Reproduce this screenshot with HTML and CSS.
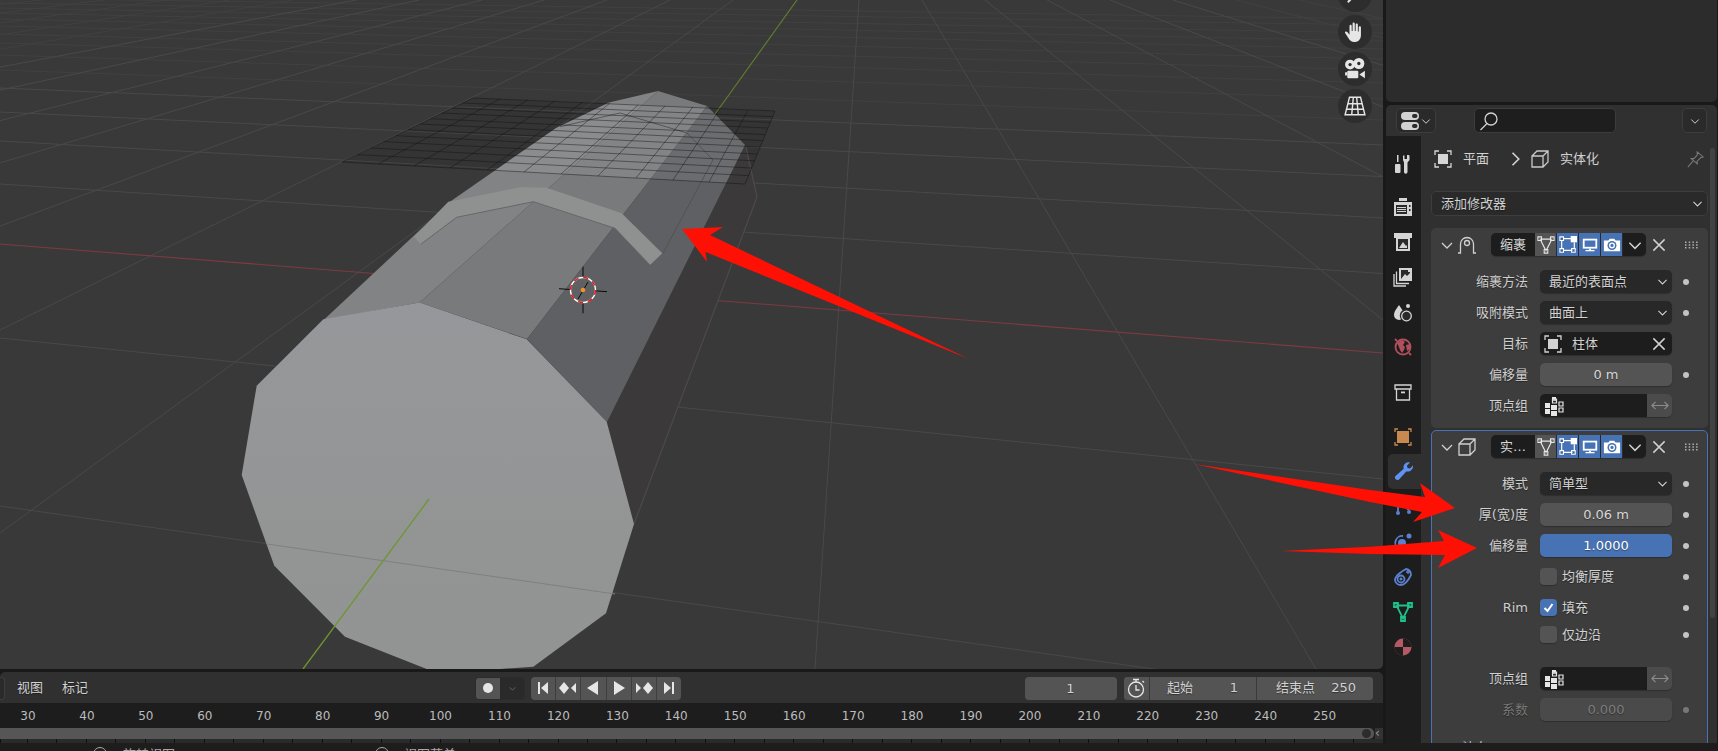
FILE: index.html
```html
<!DOCTYPE html>
<html lang="zh">
<head>
<meta charset="utf-8">
<title>Blender</title>
<link rel="stylesheet" href="styles.css">
</head>
<body>
<svg class="defs" width="0" height="0">
  <symbol id="i-chev" viewBox="0 0 16 16"><polyline class="s" points="3,6 8,11 13,6"/></symbol>
  <symbol id="i-close" viewBox="0 0 16 16"><path class="s" d="M3 3l10 10M13 3L3 13"/></symbol>
  <symbol id="i-grip" viewBox="0 0 15 8"><path class="dash" d="M1 1.200h14M1 4h14M1 6.800h14"/></symbol>
  <symbol id="i-obj" viewBox="0 0 20 20"><path class="s" d="M2 6V2h4M14 2h4v4M18 14v4h-4M6 18H2v-4"/><rect class="f" x="5" y="5" width="10" height="10"/></symbol>
  <symbol id="i-cube" viewBox="0 0 20 20"><path class="s" d="M2 7h11v11H2zM2 7l5-5h11v11l-5 5M13 7l5-5"/></symbol>
  <symbol id="i-shrink" viewBox="0 0 20 20"><path class="s" d="M1 18h2.500V9a6.500 6.500 0 0 1 13 0v9H19"/><circle class="s" cx="10" cy="8" r="2.500"/></symbol>
  <symbol id="i-vert" viewBox="0 0 20 20"><path class="s" d="M3.500 3.500h13l-6.500 13z"/><path class="sq" d="M1 1h4v4H1zM15 1h4v4h-4zM8 15h4v4H8z"/></symbol>
  <symbol id="i-edit" viewBox="0 0 20 20"><path class="s" d="M5 3h9M3 5v9M5 16h10M17 7v7"/><path class="sq" d="M1 1h4v4H1zM1 14h4v4H1zM14 14h4v4h-4z"/><rect class="f" x="13" y="0" width="7" height="7"/></symbol>
  <symbol id="i-mon" viewBox="0 0 20 20"><rect class="f" x="2" y="3" width="16" height="11"/><rect class="hole" x="4" y="5" width="12" height="7"/><rect class="f" x="5" y="15.500" width="10" height="1.500"/><rect class="f" x="9" y="14" width="2" height="2"/></symbol>
  <symbol id="i-cam" viewBox="0 0 20 20"><path class="f" d="M1 5h5l1.500-2h5L14 5h5v12H1z"/><circle class="holec" cx="10" cy="10.500" r="5"/><circle class="f" cx="10" cy="10.500" r="3.300"/><circle class="holec" cx="10" cy="10.500" r="1.800"/></symbol>
  <symbol id="i-vg" viewBox="0 0 20 20"><path class="f" d="M1 7h5v5H1zM1 13h5v5H1zM7 9h6v5H7zM7 15h6v5H7zM8 1h4v4H8z"/><path class="sq" d="M8.500 3h4v4h-4zM15 6h4v4h-4zM15 12h4v4h-4z"/></symbol>
  <symbol id="i-lr" viewBox="0 0 20 12"><path class="s" d="M1 6h18M5 2L1 6l4 4M15 2l4 4-4 4"/></symbol>
  <symbol id="i-pin" viewBox="0 0 20 20"><path class="s" d="M12 1l7 6-3 1-4 4 0 3-7-6 3 0 4-4zM7 12l-6 7"/></symbol>
  <symbol id="i-toggle" viewBox="0 0 20 20"><rect class="f" x="1" y="1" width="18" height="8" rx="4"/><rect class="f" x="1" y="11" width="18" height="8" rx="4"/><rect class="holed" x="12" y="3" width="5.500" height="4" rx="2"/><rect class="holed" x="12" y="13" width="5.500" height="4" rx="2"/></symbol>
  <symbol id="i-search" viewBox="0 0 20 20"><circle class="s" cx="12" cy="8" r="6"/><path class="s" d="M8 12.500L1.500 19"/></symbol>
  <symbol id="t-tool" viewBox="0 0 20 20"><path class="f" d="M4 1h1.500v7H4zM2 11a1 1 0 0 1 1-1h3.500a1 1 0 0 1 1 1v7a1 1 0 0 1-1 1H3a1 1 0 0 1-1-1z"/><path class="f" d="M10 1.500l1.500 0V5h2.500V1l0.500 0h1l1 .5V6l-2 2.500V18a1.500 1.500 0 0 1-3.500 0V8.500L10 6z"/></symbol>
  <symbol id="t-render" viewBox="0 0 20 20"><path class="f" d="M1 5h18v14H1zM6 1h8v3H6z"/><path class="holed" d="M3 8h11v9H3zM16 8h1.500v2H16zM16 12h1.500v2H16z"/><path class="f" d="M4 10h9v1H4zM4 12h9v1H4zM4 14h9v1H4z"/></symbol>
  <symbol id="t-output" viewBox="0 0 20 20"><path class="f" d="M1 1h18v5h-2v13H3V6H1z"/><path class="holed" d="M5 7h10v10H5z"/><path class="f" d="M6 16l4-6 3 4 1-1v3z"/></symbol>
  <symbol id="t-layer" viewBox="0 0 20 20"><path class="s" d="M1 7v12h12M3.500 4.500V16.500H16"/><path class="f" d="M6 1h13v13H6z"/><path class="holed" d="M8 3h9v9H8z"/><path class="f" d="M8 12l4-5 2 2 3-3v6zM15 3h2v2h-2z"/></symbol>
  <symbol id="t-scene" viewBox="0 0 20 20"><path class="f" d="M6 3c1 2 5 6 5 10a5 5 0 0 1-10 0c0-4 4-8 5-10z"/><circle class="holed" cx="13" cy="13.500" r="6.200"/><circle class="s" cx="13.500" cy="14" r="4.800"/><circle class="f" cx="15" cy="4" r="2"/></symbol>
  <symbol id="t-world" viewBox="0 0 20 20"><circle class="s2" cx="10" cy="10" r="7.500"/><path class="f" d="M4 6l5-3 3 2-2 3 2 2-1 3-2 3-2-3-1-3zM13 8l4-1 0 5-3 2z"/><path class="s2" d="M2 2l2 2M18 18l-2-2"/></symbol>
  <symbol id="t-coll" viewBox="0 0 20 20"><path class="s" d="M2 3h16v4H2zM3.500 7v11h13V7"/><rect class="f" x="8" y="9.500" width="4" height="1.800"/></symbol>
  <symbol id="t-objc" viewBox="0 0 20 20"><path class="s" d="M2 5V2h3M15 2h3v3M18 15v3h-3M5 18H2v-3"/><rect class="f" x="4" y="4" width="12" height="12"/></symbol>
  <symbol id="t-wrench" viewBox="0 0 20 20"><path class="f" d="M19 3.500l-3 3-2.500-.5-.5-2.500 3-3c-3-.8-6 1-6.500 4-.1.800 0 1.500.2 2.200L1.500 14a2.500 2.500 0 0 0 3.500 3.500l7.300-8.100c3.500 1 7.300-2 6.700-5.900z"/></symbol>
  <symbol id="t-part" viewBox="0 0 20 20"><path class="s2" d="M5 2v13M11 2c0 6 2 9 5 11"/><circle class="f" cx="5" cy="16" r="2"/><circle class="f" cx="16" cy="15" r="2"/></symbol>
  <symbol id="t-phys" viewBox="0 0 20 20"><circle class="f" cx="9" cy="11" r="4"/><path class="s2" d="M15 15a7 7 0 1 1-5-11"/><circle class="f" cx="16" cy="4" r="2.500"/></symbol>
  <symbol id="t-cons" viewBox="0 0 20 20"><path class="s2" d="M2 13c0-4 7-9 11-11 3 .5 5 3 5 6 -2 4-6 10-10 10-3 0-6-2-6-5z"/><circle class="s2" cx="8" cy="12" r="3.500"/><circle class="f" cx="8" cy="12" r="1.500"/><path class="s" d="M15 3v4M13 5h4"/></symbol>
  <symbol id="t-data" viewBox="0 0 20 20"><path class="s2" d="M3.500 3.500h13l-6.500 13z"/><path class="sq2" d="M1 1h4v4H1zM15 1h4v4h-4zM8 15h4v4H8z"/></symbol>
  <symbol id="t-mat" viewBox="0 0 20 20"><circle class="f" cx="10" cy="10" r="8.500"/><path class="blk" d="M10 1.500V10H18.500A8.500 8.500 0 0 0 10 1.500zM10 10H1.500A8.500 8.500 0 0 0 10 18.500z"/></symbol>
  <symbol id="g-hand" viewBox="0 0 20 20"><path class="f" d="M5 17l-4-6c-.6-1.400 1-2 2-1l2 2.500V4.500c0-1.500 2-1.500 2 0V9h.8V2.500c0-1.500 2-1.500 2 0V9h.8V3.500c0-1.500 2-1.500 2 0V9.500h.8V6c0-1.500 2-1.500 2 0v7c0 3-2 6-5 6H9c-2 0-3-1-4-2z"/></symbol>
  <symbol id="g-camera" viewBox="0 0 20 20"><circle class="f" cx="5.500" cy="6" r="4.500"/><circle class="f" cx="13.500" cy="5" r="5"/><rect class="f" x="3" y="11.500" width="10" height="7" rx="1"/><path class="f" d="M14 15l5-3.500v7zM1 13h2v3H1z"/><circle class="holed" cx="5.500" cy="6" r="1.500"/><circle class="holed" cx="13.500" cy="5" r="1.500"/></symbol>
  <symbol id="g-grid" viewBox="0 0 20 20"><path class="s" d="M5 2h10l4 16H1zM3.500 8h13M2.300 13h15.400M8.500 2L7 18M11.500 2L13 18"/></symbol>
  <symbol id="g-search" viewBox="0 0 20 20"><circle class="s3" cx="12" cy="8" r="6"/><path class="s3" d="M7 13L2 18"/></symbol>
  <symbol id="p-first" viewBox="0 0 14 14"><rect class="f" x="2" y="1" width="2" height="12"/><polygon class="f" points="12,1 12,13 5,7"/></symbol>
  <symbol id="p-kprev" viewBox="0 0 18 14"><polygon class="f" points="5,1 10,7 5,13 0,7"/><polygon class="f" points="17,2 17,12 12,7"/></symbol>
  <symbol id="p-rev" viewBox="0 0 14 14"><polygon class="f" points="12,0 12,14 1,7"/></symbol>
  <symbol id="p-play" viewBox="0 0 14 14"><polygon class="f" points="2,0 2,14 13,7"/></symbol>
  <symbol id="p-knext" viewBox="0 0 18 14"><polygon class="f" points="1,2 1,12 6,7"/><polygon class="f" points="13,1 18,7 13,13 8,7"/></symbol>
  <symbol id="p-last" viewBox="0 0 14 14"><polygon class="f" points="2,1 2,13 9,7"/><rect class="f" x="10" y="1" width="2" height="12"/></symbol>
  <symbol id="p-timer" viewBox="0 0 20 20"><circle class="s" cx="10" cy="11.500" r="7.500"/><path class="s" d="M7 1.500h6M10 1.500V4M10 7v5h3.500M16.500 3l1.500 1.500"/></symbol>
</svg>

<div class="app">
  <div class="work">
    <div class="left">
      <main class="viewport">
        <svg class="scene" viewBox="0 0 1383 669" preserveAspectRatio="none">
          <defs>
            <linearGradient id="capfill" x1="0" y1="0" x2="0" y2="1">
              <stop offset="0" stop-color="#96979a"/>
              <stop offset="1" stop-color="#919492"/>
            </linearGradient>
            <clipPath id="planeclip"><polygon points="342,162 473,98 775,111 745,184"/></clipPath>
          </defs>
          <g class="gridfar">
            <path d="M0 70L1383 120M0 55L1383 99M0 43L1383 83M0 34L1383 70M0 26L1383 59M0 19L1383 49M0 13L1383 41M0 8L1383 33M0 3L1383 25M0 -2L1383 19"/>
            <path d="M41 0L-5699 669M104 0L-5198 669M167 0L-4697 669M230 0L-4195 669M293 0L-3694 669M1236 0L3822 669M1299 0L4323 669"/>
          </g>
          <g class="grid">
            <path d="M0 506L1161 670M0 338L1383 479M0 184L1383 273.500M0 141L1383 218M0 112L1383 176.600M0 88L1383 145"/>
            <path d="M356 0L-3193 669M419 0L-2692 669M482 0L-2191 669M544 0L-1690 669M607 0L-1189 669M670 0L-688 669M733 0L-187 669M859 0L815 669M922 0L1316 669M985 0L1817 669M1047 0L2318 669M1110 0L2820 669M1173 0L3321 669"/>
          </g>
          <path class="axis-x" d="M0 244L1383 353"/>
          <path class="axis-y" d="M797 0L713 117"/>

          <g class="plane">
            <polygon class="plane-fill" points="342,162 473,98 775,111 745,184"/>
          </g>

          <polygon class="face-d" points="607,422 634,524 757,197 745,145"/>
          <path class="face-d-edge" d="M634 524L757 197L746 147"/>
          <polygon class="face-a" points="323.600,320 419.600,302.600 658,91 609,102.600 556,128 451,201"/>
          <polygon class="face-b" points="419.600,302.600 527,339 707,106 658,91"/>
          <polygon class="face-c" points="527,339 607,422 745,145 707,106"/>
          <g clip-path="url(#planeclip)">
            <polygon class="plane-lit" points="323.600,320 527,339 607,422 745,145 707,106 658,91 609,102.600 556,128 451,201"/>
          </g>
          <path class="ring" d="M560 126.700L620 113L687 133L713 160L663 253"/>
          <path class="plane-lines" d="M342 162L473 98M378 164L500 99M414 166L528 100M450 168L555 101M487 170L583 102M524 172L610 103M561 174L638 105M598 176L665 106M636 178L693 107M673 180L720 109M709 182L748 110M745 184L775 111M473 98L775 111M463 103L772.700 116.700M452.600 108L770.300 122.400M442.300 113L768 128M430.700 118.700L765.300 134.600M420 124L762.800 140.600M408 129.700L760 147M395.800 135.700L757.300 154M383.700 141.600L754.500 160.800M370.700 148L751.600 168M357 154.600L748.500 175.600M342 162L745 184"/>
          <polygon class="band" points="414,236.700 448.300,201.700 520,187.300 546.700,187.700 621.700,213.300 662.300,253.300 650,265 615,228.300 533.300,201.700 456.700,217.300 420.700,244.300"/>
          <path class="band-edge" d="M420.700 244.300L456.700 217.300L533.300 201.700L615 228.300L650 265"/>

          <polygon class="cap" points="419.600,302.600 526.700,339.300 606.700,421.700 634,524 606,613.300 533.300,666.700 500,669 426.700,669 345,636.700 274.300,565.700 241.700,475 256.700,385.700 323.300,319.300"/>
          <path class="cap-line" d="M267 544L615 594"/>
          <path class="axis-y-front" d="M429 499L303 669"/>

          <g class="cursor">
            <path class="cur-cross" d="M583 266.700V278M583 303V313.300M559 288.700L571 289.600M595 290.800L607 291.700M578 299L588 282"/>
            <circle class="cur-ring-w" cx="583" cy="290" r="12.500"/>
            <circle class="cur-ring-r" cx="583" cy="290" r="12.500"/>
            <circle class="cur-dot" cx="583" cy="290" r="2.300"/>
          </g>
        </svg>
        <div class="gizmos">
          <span class="gizmo"><svg class="ic18"><use href="#g-search"/></svg></span>
          <span class="gizmo"><svg class="ic22"><use href="#g-hand"/></svg></span>
          <span class="gizmo"><svg class="ic22"><use href="#g-camera"/></svg></span>
          <span class="gizmo"><svg class="ic22"><use href="#g-grid"/></svg></span>
        </div>
      </main>

      <section class="timeline">
        <div class="tl-head">
          <span class="tl-type"></span>
          <span class="tl-menu">视图</span>
          <span class="tl-menu">标记</span>
          <div class="rec">
            <span class="rec-dot"><i></i></span>
            <span class="rec-more"><svg class="ic9"><use href="#i-chev"/></svg></span>
          </div>
          <div class="transport">
            <span class="tbtn"><svg class="ic14"><use href="#p-first"/></svg></span>
            <span class="tbtn"><svg class="ic18w"><use href="#p-kprev"/></svg></span>
            <span class="tbtn"><svg class="ic14"><use href="#p-rev"/></svg></span>
            <span class="tbtn"><svg class="ic14"><use href="#p-play"/></svg></span>
            <span class="tbtn"><svg class="ic18w"><use href="#p-knext"/></svg></span>
            <span class="tbtn"><svg class="ic14"><use href="#p-last"/></svg></span>
          </div>
          <span class="frame">1</span>
          <div class="range">
            <span class="range-timer"><svg class="ic20"><use href="#p-timer"/></svg></span>
            <span class="range-seg range-start"><b>起始</b><b>1</b></span>
            <span class="range-seg range-end"><b>结束点</b><b>250</b></span>
          </div>
        </div>
        <div class="ruler">
          <span>30</span><span>40</span><span>50</span><span>60</span><span>70</span><span>80</span><span>90</span><span>100</span><span>110</span><span>120</span><span>130</span><span>140</span><span>150</span><span>160</span><span>170</span><span>180</span><span>190</span><span>200</span><span>210</span><span>220</span><span>230</span><span>240</span><span>250</span>
        </div>
        <div class="scrollrow">
          <div class="scrollbar"><i></i></div>
          <span class="collapse">‹</span>
        </div>
        <div class="ticks"></div>
      </section>
    </div>

    <aside class="right">
      <div class="outliner"></div>
      <section class="props">
        <header class="props-head">
          <span class="hbtn hbtn-type"><svg class="ic20"><use href="#i-toggle"/></svg><svg class="ic12"><use href="#i-chev"/></svg></span>
          <span class="search"><svg class="ic20"><use href="#i-search"/></svg></span>
          <span class="hbtn hbtn-opt"><svg class="ic12"><use href="#i-chev"/></svg></span>
        </header>
        <div class="props-body">
          <nav class="tabs">
            <span class="tab tab-gap-s"><svg class="ic20"><use href="#t-tool"/></svg></span>
            <span class="tab"><svg class="ic20"><use href="#t-render"/></svg></span>
            <span class="tab"><svg class="ic20"><use href="#t-output"/></svg></span>
            <span class="tab"><svg class="ic20"><use href="#t-layer"/></svg></span>
            <span class="tab"><svg class="ic20"><use href="#t-scene"/></svg></span>
            <span class="tab tab-gap tab-world"><svg class="ic20"><use href="#t-world"/></svg></span>
            <span class="tab tab-gap"><svg class="ic20"><use href="#t-coll"/></svg></span>
            <span class="tab tab-obj"><svg class="ic20"><use href="#t-objc"/></svg></span>
            <span class="tab tab-active"><svg class="ic20"><use href="#t-wrench"/></svg></span>
            <span class="tab tab-blue"><svg class="ic20"><use href="#t-part"/></svg></span>
            <span class="tab tab-blue"><svg class="ic20"><use href="#t-phys"/></svg></span>
            <span class="tab tab-blue"><svg class="ic20"><use href="#t-cons"/></svg></span>
            <span class="tab tab-green"><svg class="ic20"><use href="#t-data"/></svg></span>
            <span class="tab tab-red"><svg class="ic20"><use href="#t-mat"/></svg></span>
          </nav>
          <div class="content">
            <div class="crumbs">
              <svg class="ic20 crumb-obj"><use href="#i-obj"/></svg>
              <span class="crumb-name">平面</span>
              <svg class="ic20 crumb-sep"><use href="#i-chev"/></svg>
              <svg class="ic20 crumb-cube"><use href="#i-cube"/></svg>
              <span class="crumb-mod">实体化</span>
              <svg class="ic17 crumb-pin"><use href="#i-pin"/></svg>
            </div>
            <div class="addmod"><span>添加修改器</span><svg class="ic13"><use href="#i-chev"/></svg></div>

            <section class="panel">
              <div class="panel-head">
                <svg class="ic16 ph-chev"><use href="#i-chev"/></svg>
                <svg class="ic20 ph-icon"><use href="#i-shrink"/></svg>
                <div class="pills">
                  <span class="pill-name">缩裹</span>
                  <span class="pill pill-off"><svg class="ic18"><use href="#i-vert"/></svg></span>
                  <span class="pill pill-on"><svg class="ic18"><use href="#i-edit"/></svg></span>
                  <span class="pill pill-on"><svg class="ic18"><use href="#i-mon"/></svg></span>
                  <span class="pill pill-on"><svg class="ic18"><use href="#i-cam"/></svg></span>
                  <span class="pill-more"><svg class="ic18"><use href="#i-chev"/></svg></span>
                </div>
                <svg class="ic18 ph-close"><use href="#i-close"/></svg>
                <svg class="grip"><use href="#i-grip"/></svg>
              </div>
              <div class="row"><label>缩裹方法</label><span class="field select"><span>最近的表面点</span><svg class="ic13"><use href="#i-chev"/></svg></span><i class="dot"></i></div>
              <div class="row"><label>吸附模式</label><span class="field select"><span>曲面上</span><svg class="ic13"><use href="#i-chev"/></svg></span><i class="dot"></i></div>
              <div class="row"><label>目标</label><span class="field picker"><svg class="ic20"><use href="#i-obj"/></svg><span class="picker-text">柱体</span><svg class="ic18"><use href="#i-close"/></svg></span><i class="dot dot-none"></i></div>
              <div class="row"><label>偏移量</label><span class="field num">0 m</span><i class="dot"></i></div>
              <div class="row"><label>顶点组</label><span class="field vg"><span class="vg-in"><svg class="ic20"><use href="#i-vg"/></svg></span><span class="vg-btn"><svg class="lr"><use href="#i-lr"/></svg></span></span><i class="dot dot-none"></i></div>
            </section>

            <section class="panel panel-active">
              <div class="panel-head">
                <svg class="ic16 ph-chev"><use href="#i-chev"/></svg>
                <svg class="ic20 ph-icon"><use href="#i-cube"/></svg>
                <div class="pills">
                  <span class="pill-name">实…</span>
                  <span class="pill pill-off"><svg class="ic18"><use href="#i-vert"/></svg></span>
                  <span class="pill pill-on"><svg class="ic18"><use href="#i-edit"/></svg></span>
                  <span class="pill pill-on"><svg class="ic18"><use href="#i-mon"/></svg></span>
                  <span class="pill pill-on"><svg class="ic18"><use href="#i-cam"/></svg></span>
                  <span class="pill-more"><svg class="ic18"><use href="#i-chev"/></svg></span>
                </div>
                <svg class="ic18 ph-close"><use href="#i-close"/></svg>
                <svg class="grip"><use href="#i-grip"/></svg>
              </div>
              <div class="row"><label>模式</label><span class="field select"><span>简单型</span><svg class="ic13"><use href="#i-chev"/></svg></span><i class="dot"></i></div>
              <div class="row"><label>厚(宽)度</label><span class="field num">0.06 m</span><i class="dot"></i></div>
              <div class="row"><label>偏移量</label><span class="field num num-blue">1.0000</span><i class="dot"></i></div>
              <div class="row"><label></label><span class="check"><i class="box"></i><span>均衡厚度</span></span><i class="dot"></i></div>
              <div class="row row-tight"><label>Rim</label><span class="check"><i class="box box-on"><svg class="ic13"><polyline class="tick" points="2.500,7 5.500,10 10.500,3"/></svg></i><span>填充</span></span><i class="dot"></i></div>
              <div class="row row-end"><label></label><span class="check"><i class="box"></i><span>仅边沿</span></span><i class="dot"></i></div>
              <div class="row"><label>顶点组</label><span class="field vg"><span class="vg-in"><svg class="ic20"><use href="#i-vg"/></svg></span><span class="vg-btn"><svg class="lr"><use href="#i-lr"/></svg></span></span><i class="dot dot-none"></i></div>
              <div class="row row-off"><label>系数</label><span class="field num">0.000</span><i class="dot"></i></div>
              <div class="subhead">法向</div>
            </section>
          </div>
        </div>
      </section>
    </aside>
  </div>
  <footer class="status">
    <span class="st-icon st-a"></span><span class="st-text">旋转视图</span>
    <span class="st-icon st-b"></span><span class="st-text">视图菜单</span>
    <span class="st-ver">3.1.2</span>
  </footer>
</div>

<svg class="arrows" viewBox="0 0 1718 751">
  <polygon points="682,229 723,227 710,235 969,359 705.600,252 707,262"/>
  <polygon points="1194,464 1370,490 1425,497 1420,483 1455,508 1413,522 1422,512 1370,502"/>
  <polygon points="1281,551 1370,546.700 1444,541 1438,530 1477,548 1438,568 1445,555 1370,554"/>
</svg>
</body>
</html>
```

FILE: styles.css
```css
* { box-sizing: border-box; }
html, body { margin: 0; padding: 0; height: 100%; }
body {
  background: #191919;
  overflow: hidden;
  color: #d2d2d2;
  font: 13px/16px "DejaVu Sans", "Noto Sans CJK SC", sans-serif;
  position: relative;
}
.defs { position: absolute; }
.s { fill: none; stroke: currentColor; stroke-width: 1.3; }
.s2 { fill: none; stroke: currentColor; stroke-width: 1.8; }
.s3 { fill: none; stroke: currentColor; stroke-width: 2.2; }
.f { fill: currentColor; }
.sq { fill: #3a3a3a; fill-opacity: .25; stroke: currentColor; stroke-width: 1.2; }
.sq2 { fill: none; stroke: currentColor; stroke-width: 1.8; }
.hole { fill: #4772b3; }
.holec { fill: #4772b3; }
.holed { fill: #2a2a2a; }
.blk { fill: #1d1d1d; }
.dash { fill: none; stroke: currentColor; stroke-width: 1.4; stroke-dasharray: 1.5 2.2; }
.tick { fill: none; stroke: #fff; stroke-width: 2; }

.ic9 { width: 9px; height: 9px; }
.ic10 { width: 10px; height: 10px; }
.ic12 { width: 12px; height: 12px; }
.ic13 { width: 13px; height: 13px; flex: none; }
.ic14 { width: 14px; height: 14px; }
.ic16 { width: 16px; height: 16px; flex: none; }
.ic17 { width: 17px; height: 17px; flex: none; }
.ic18 { width: 18px; height: 18px; flex: none; }
.ic18w { width: 18px; height: 14px; }
.ic20 { width: 20px; height: 20px; flex: none; }
.ic22 { width: 22px; height: 22px; }

.app { display: flex; flex-direction: column; height: 751px; width: 1718px; }
.work { display: flex; height: 743px; flex: none; }
.left { width: 1383px; flex: none; display: flex; flex-direction: column; gap: 3px; }
.right { width: 331px; flex: none; margin-left: 3px; display: flex; flex-direction: column; gap: 3px; }

/* viewport */
.viewport {
  position: relative;
  height: 669px;
  flex: none;
  background: #393939;
  overflow: hidden;
  border-radius: 0 0 5px 0;
}
.scene { display: block; width: 1383px; height: 669px; }
.grid path { fill: none; stroke: #494949; stroke-width: 1; }
.gridfar path { fill: none; stroke: #434343; stroke-width: .8; }
.axis-x { fill: none; stroke: #7e3a44; stroke-width: 1.1; }
.axis-y { fill: none; stroke: #5f7d2f; stroke-width: 1.2; }
.axis-y-front { fill: none; stroke: #6e962f; stroke-width: 1.3; }
.plane-fill { fill: #000; fill-opacity: .07; }
.face-a { fill: #828385; }
.face-b { fill: #797a7c; }
.face-c { fill: #5f6063; }
.face-d { fill: #3b393a; }
.face-d-edge { fill: none; stroke: #4d4a48; stroke-width: 1.2; }
.plane-lit { fill: #fff; fill-opacity: .08; }
.ring { fill: none; stroke: #4f5052; stroke-width: .9; }
.plane-lines { fill: none; stroke: #111; stroke-opacity: .6; stroke-width: .75; }
.band { fill: #8f9190; }
.band-edge { fill: none; stroke: #666768; stroke-width: 1; }
.cap { fill: url(#capfill); }
.cap-line { fill: none; stroke: #7e807f; stroke-width: 1; }
.cur-cross { fill: none; stroke: #000; stroke-width: .9; }
.cur-ring-w { fill: none; stroke: #fff; stroke-width: 1.4; }
.cur-ring-r { fill: none; stroke: #e01818; stroke-width: 1.5; stroke-dasharray: 4.900 4.900; }
.cur-dot { fill: #f5921c; }

.gizmos {
  position: absolute;
  right: 11px;
  top: -22px;
  display: flex;
  flex-direction: column;
  gap: 3px;
}
.gizmo {
  width: 34px;
  height: 34px;
  border-radius: 50%;
  background: #2d2d2d;
  color: #e6e6e6;
  display: flex;
  align-items: center;
  justify-content: center;
}

/* timeline */
.timeline { height: 71px; flex: none; background: #1d1d1d; border-radius: 5px 5px 0 0; overflow: hidden; }
.tl-head {
  height: 31px;
  background: #303030;
  display: flex;
  align-items: center;
  text-shadow: 0 1px 1px rgba(0,0,0,.4);
  padding-top: 1px;
}
.tl-type {
  width: 5px;
  height: 23px;
  background: #2a2a2a;
  border: 1px solid #3d3d3d;
  border-left: 0;
  border-radius: 0 4px 4px 0;
}
.tl-menu { width: 26px; margin-left: 12px; white-space: nowrap; }
.tl-menu + .tl-menu { margin-left: 19px; }
.rec {
  margin-left: 387px;
  width: 50px;
  height: 23px;
  display: flex;
  border-radius: 4px;
  overflow: hidden;
  border: 1px solid #2c2c2c;
}
.rec-dot { flex: 1; background: #545454; display: flex; align-items: center; justify-content: center; }
.rec-dot i { width: 10px; height: 10px; border-radius: 50%; background: #e6e6e6; }
.rec-more { flex: 1; background: #2a2a2a; color: #777; display: flex; align-items: center; justify-content: center; }
.transport {
  margin-left: 6px;
  width: 150px;
  height: 23px;
  display: flex;
  gap: 1px;
  background: #3e3e3e;
  border-radius: 4px;
  overflow: hidden;
}
.tbtn { flex: 1; background: #545454; color: #e6e6e6; display: flex; align-items: center; justify-content: center; }
.frame {
  margin-left: 343.500px;
  width: 92px;
  height: 23px;
  border-radius: 4px;
  background: #545454;
  text-align: center;
  line-height: 23px;
}
.range {
  margin-left: 7.500px;
  width: 249px;
  height: 23px;
  display: flex;
  background: #545454;
  border-radius: 4px;
  overflow: hidden;
  gap: 1px;
}
.range-timer { width: 24px; background: #545454; color: #e6e6e6; display: flex; align-items: center; justify-content: center; }
.range-seg { background: #545454; display: flex; justify-content: space-between; align-items: center; }
.range-seg b { font-weight: 400; }
.range-start { width: 106px; padding: 0 17px; border-left: 1px solid #3a3a3a; }
.range-end { flex: 1; padding: 0 17px 0 19px; border-left: 1px solid #3a3a3a; }
.ruler {
  height: 25px;
  display: flex;
  background: #1d1d1d;
  font-size: 12px;
  color: #bcbcbc;
  line-height: 26px;
}
.ruler span { flex: 0 0 58.950px; text-align: center; }
.ruler span:first-child { margin-left: -1.500px; }
.scrollrow { display: flex; height: 11px; align-items: stretch; position: relative; }
.scrollbar {
  width: 1374px;
  background: #565656;
  position: relative;
  border-radius: 0 5px 5px 0;
}
.scrollbar i {
  position: absolute;
  right: 3px;
  top: 1px;
  width: 9px;
  height: 9px;
  border-radius: 50%;
  background: #2c2c2c;
}
.collapse { margin-left: 1px; width: 8px; color: #9a9a9a; font-size: 12px; line-height: 11px; background: #333; }
.ticks {
  height: 4px;
  background-color: #2a2a2a;
  background-image: repeating-linear-gradient(90deg, #0f0f0f 0 1px, transparent 1px 29.475px);
  background-position: 27px 0;
}

/* right */
.outliner { height: 102px; flex: none; background: #2c2c2c; border-radius: 0 0 5px 5px; }
.props { flex: 1; min-height: 0; display: flex; flex-direction: column; background: #303030; border-radius: 5px 5px 0 0; overflow: hidden; }
.props-head { height: 31px; flex: none; display: flex; align-items: center; padding: 0 10px; }
.hbtn {
  height: 25px;
  border-radius: 5px;
  border: 1px solid #3d3d3d;
  background: #2a2a2a;
  display: flex;
  align-items: center;
  justify-content: center;
}
.hbtn-type { width: 40px; }
.search {
  margin-left: 38px;
  width: 142px;
  height: 25px;
  background: #1e1e1e;
  border: 1px solid #3d3d3d;
  border-radius: 5px;
  display: flex;
  align-items: center;
  padding-left: 4px;
}
.hbtn-opt { margin-left: 66px; width: 25px; }
.props-body { flex: 1; min-height: 0; display: flex; }

.tabs { width: 35px; flex: none; background: #1d1d1d; padding-top: 10px; }
.tab {
  height: 35px;
  display: flex;
  align-items: center;
  justify-content: center;
  color: #d5d5d5;
  padding-right: 1px;
}
.tab-gap-s { margin-bottom: 8px; }
.tab-gap { margin-bottom: 10px; }
.tab-world { color: #b14f5c; }
.tab-obj { color: #c8884f; }
.tab-active { background: #303030; color: #5f93f2; margin-left: 2px; border-radius: 5px 0 0 5px; }
.tab-blue { color: #5b80d0; }
.tab-green { color: #1fc08a; }
.tab-red { color: #b45a64; }

.content { flex: 1; min-width: 0; padding: 10px 9px 0 10px; overflow: hidden; position: relative; }
.content::after {
  content: "";
  position: absolute;
  right: 2px;
  top: 12px;
  height: 470px;
  width: 5px;
  border-radius: 3px;
  background: #434343;
}
.crumbs { height: 26px; display: flex; align-items: center; margin-bottom: 19px; }
.crumb-obj { margin-left: 2px; color: #d5d5d5; }
.crumb-name { margin-left: 10px; width: 26px; }
.crumb-sep { margin-left: 16px; transform: rotate(-90deg); }
.crumb-cube { margin-left: 5px; color: #c9c9c9; }
.crumb-mod { margin-left: 10px; width: 39px; white-space: nowrap; }
.crumb-pin { margin-left: auto; margin-right: 4px; color: #777; }
.addmod {
  height: 25px;
  margin-bottom: 12px;
  background: #2a2a2a;
  border: 1px solid #3d3d3d;
  border-radius: 5px;
  display: flex;
  align-items: center;
  justify-content: space-between;
  padding: 0 3px 0 9px;
  text-shadow: 0 1px 1px rgba(0,0,0,.4);
}

.panel {
  background: #3d3d3d;
  border: 1px solid transparent;
  border-radius: 5px;
  padding-top: 4px;
  padding-bottom: 2px;
  margin-bottom: 2px;
}
.panel-active { border-color: #4772b3; padding-bottom: 40px; }
.panel-head { height: 23px; display: flex; align-items: center; margin-bottom: 14px; color: #d0d0d0; }
.ph-chev { margin-left: 7px; }
.ph-icon { margin-left: 2px; }
.pills {
  margin-left: 14px;
  width: 155px;
  height: 23px;
  display: flex;
  border-radius: 5px;
  overflow: hidden;
  background: #1d1d1d;
  box-shadow: 0 1px 1px rgba(0,0,0,.25);
}
.pill-name { width: 44px; text-align: center; line-height: 23px; color: #d8d8d8; white-space: nowrap; }
.pill { width: 22px; margin-right: 0; display: flex; align-items: center; justify-content: center; border-right: 1px solid #2a2a2a; color: #e6e6e6; }
.pill-off { background: #545454; }
.pill-on { background: #4772b3; color: #fff; }
.pill-more { flex: 1; display: flex; align-items: center; justify-content: center; }
.ph-close { margin-left: 4px; }
.grip { margin-left: 16px; width: 15px; height: 8px; color: #b0b0b0; }

.row { height: 23px; display: flex; align-items: center; margin-bottom: 8px; text-shadow: 0 1px 1px rgba(0,0,0,.4); }
.row-tight { margin-bottom: 4px; }
.row-end { margin-bottom: 21px; }
.row label { width: 96px; text-align: right; color: #cfcfcf; white-space: nowrap; }
.row-off { color: #7d7d7d; }
.row-off label { color: #777; }
.field {
  margin-left: 12px;
  width: 132px;
  height: 23px;
  border-radius: 5px;
  display: flex;
  align-items: center;
  box-shadow: 0 1px 1px rgba(0,0,0,.25);
}
.select { background: #282828; justify-content: space-between; padding: 0 3px 0 9px; }
.picker { background: #1d1d1d; padding: 0 4px 0 3px; }
.picker-text { margin-left: 9px; flex: 1; }
.num { background: #545454; justify-content: center; color: #d8d8d8; }
.num-blue { background: #4772b3; color: #fff; }
.row-off .num { background: #4a4a4a; color: #7d7d7d; }
.vg { overflow: hidden; }
.vg-in { width: 107px; height: 100%; background: #1d1d1d; display: flex; align-items: center; padding-left: 4px; color: #e6e6e6; }
.vg-btn { flex: 1; height: 100%; background: #4b4b4b; display: flex; align-items: center; justify-content: center; color: #8b8b8b; }
.lr { width: 18px; height: 11px; }
.dot { margin-left: 11px; width: 6px; height: 6px; border-radius: 50%; background: #c4c4c4; flex: none; }
.dot-none { background: transparent; }
.row-off .dot { background: #777; }
.check { margin-left: 12px; width: 132px; display: flex; align-items: center; gap: 5px; }
.box { width: 17px; height: 17px; border-radius: 4px; background: #545454; display: flex; align-items: center; justify-content: center; box-shadow: 0 1px 1px rgba(0,0,0,.25); }
.box-on { background: #4772b3; }
.subhead { margin-left: 30px; margin-top: 19px; color: #bdbdbd; }

.status {
  height: 8px;
  flex: none;
  background: #1d1d1d;
  overflow: hidden;
  display: flex;
  padding-top: 4px;
  line-height: 16px;
  color: #a8a8a8;
}
.st-icon { width: 14px; height: 14px; border-radius: 50%; border: 1.500px solid #a8a8a8; flex: none; }
.st-a { margin-left: 93px; }
.st-b { margin-left: 200px; border-radius: 50% 50% 0 0; }
.st-text { margin-left: 16px; width: 52px; white-space: nowrap; }
.st-b + .st-text { margin-left: 15px; }
.st-ver { margin-left: auto; margin-right: 4px; padding-top: 2px; }

.arrows {
  position: absolute;
  left: 0;
  top: 0;
  width: 1718px;
  height: 751px;
  pointer-events: none;
}
.arrows polygon { fill: #fe1005; }
```
